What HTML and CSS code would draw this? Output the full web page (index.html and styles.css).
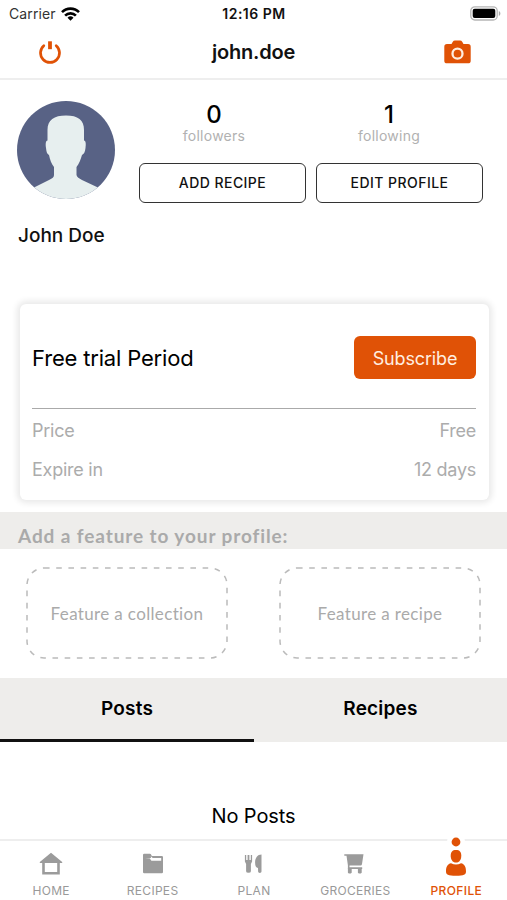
FILE: index.html
```html
<!DOCTYPE html>
<html lang="en">
<head>
<meta charset="utf-8">
<title>john.doe</title>
<link rel="stylesheet" href="styles.css">
</head>
<body>
<div class="app">
  <div class="status">
    <div class="status-left"><span class="carrier">Carrier</span>
      <svg width="19" height="14" viewBox="0 0 19 14" fill="none" stroke="#000" stroke-width="2.6"><path d="M1 5.200a12 12 0 0 1 17 0"/><path d="M4.100 8.600a7.600 7.600 0 0 1 10.800 0"/><path d="M9.500 13.700l-3-3a4.300 4.300 0 0 1 6 0z" fill="#000" stroke="none"/></svg>
    </div>
    <span class="clock">12:16 PM</span>
    <div class="status-right">
      <svg width="31" height="15" viewBox="0 0 31 15"><rect x=".8" y=".8" width="26.400" height="13.200" rx="4" fill="#fff" stroke="#b5b5b5" stroke-width="1.300"/><rect x="2.700" y="2.700" width="22.600" height="9.400" rx="2" fill="#000"/><path d="M28.800 5c2.100 1 2.100 4 0 5z" fill="#aaa"/></svg>
    </div>
  </div>
  <header class="header">
    <svg width="24" height="24" viewBox="0 0 24 24" fill="none" stroke="#e05206" stroke-linecap="round"><path d="M5.800 5.700a9.500 9.500 0 1 0 12.400 0" stroke-width="2.700"/><path d="M12 1.300v7.900" stroke-width="3.800" stroke-linecap="butt"/></svg>
    <h1>john.doe</h1>
    <svg width="27" height="24" viewBox="0 0 27 24"><path d="M3 4h4.500l1.300-2.300Q9.500.500 11 .500h5q1.500 0 2.200 1.200L19.500 4H24q2.700 0 2.700 2.700v14q0 2.600-2.700 2.600H3Q.300 23.300.300 20.700v-14Q.300 4 3 4z" fill="#e05206"/><circle cx="13.500" cy="13.700" r="5" fill="none" stroke="#ffece0" stroke-width="2.300"/></svg>
  </header>
  <section class="profile">
    <svg class="avatar" width="98" height="98" viewBox="0 0 98 98"><defs><clipPath id="round"><circle cx="49" cy="49" r="49"/></clipPath></defs><g clip-path="url(#round)"><path fill="#586285" d="M0 0h98v98H0z"/><path fill="#e7efef" d="M49 14.500C61 14.500 67 19 67 29V39.500C69 40 69 43 68.500 47S67 53 65 54C63.500 59 62 63 59.500 66V74C60 76 62 77.500 65 79L82 87V98H16V87L32 79C35.500 77.500 37 76 37 74V66C34.500 63 33 59 32 54C30 53 29.500 51 29 47S28.500 40 30.500 39.500V29C30.500 19 37 14.500 49 14.500z"/></g></svg>
    <div class="summary">
      <div class="stat"><b>0</b><span>followers</span></div>
      <div class="stat"><b>1</b><span>following</span></div>
      <button class="outline"><span class="add">ADD RECIPE</span></button>
      <button class="outline"><span class="edit">EDIT PROFILE</span></button>
    </div>
    <h2>John Doe</h2>
  </section>
  <section class="card">
    <div class="card-top"><h3>Free trial Period</h3><button class="subscribe">Subscribe</button></div>
    <div class="row"><span class="price">Price</span><span class="free">Free</span></div>
    <div class="row"><span class="expire">Expire in</span><span class="days">12 days</span></div>
  </section>
  <div class="feature-title"><span>Add a feature to your profile:</span></div>
  <div class="features">
    <div class="feature"><svg class="dash" width="202" height="92" viewBox="0 0 202 92"><rect x="1" y="1" width="200" height="90" rx="17"/></svg><span class="collection">Feature a collection</span></div>
    <div class="feature"><svg class="dash" width="202" height="92" viewBox="0 0 202 92"><rect x="1" y="1" width="200" height="90" rx="17"/></svg><span class="recipe">Feature a recipe</span></div>
  </div>
  <div class="tabs"><div class="tab active"><span class="posts">Posts</span></div><div class="tab"><span class="recs">Recipes</span></div></div>
  <main class="empty"><span>No Posts</span></main>
  <nav class="nav">
    <div class="item"><svg width="24" height="24" viewBox="0 0 24 24" fill="#9b9b9b"><path fill-rule="evenodd" d="M12 .800L23.200 10v1H20.800v11.500H3.200V11H.800v-1zM5.800 11v9h12.400v-9z"/></svg><span>HOME</span></div>
    <div class="item"><svg width="24" height="24" viewBox="0 0 24 24"><path fill="#9b9b9b" d="M2 3q0-1.200 1.200-1.200h5.600q1 0 1.400 1l.6 1.200H20.800q1.200 0 1.200 1.200v14.800q0 1.200-1.200 1.200H3.200Q2 21.200 2 20z"/><path fill="#fff" d="M4 6.500h4.800l1.600 2.300H20.200V6.100h-8.600L10.600 4.700H9.500l.8 1.200z"/></svg><span>RECIPES</span></div>
    <div class="item"><svg width="24" height="24" viewBox="0 0 24 24" fill="#9b9b9b"><path d="M2.900 3h1.300v5h1.400V3h1.800v5h1.400V3h1.300v6.500L8.900 12v7.200q0 1.600-2.400 1.600t-2.400-1.600V12L2.900 9.500z"/><path d="M19.500 2.500v17q0 1.400-1.700 1.400t-1.700-1.400l-.1-3.500q-2.900-.5-2.900-5.500c0-4.500 2.500-8 6.400-8z"/></svg><span>PLAN</span></div>
    <div class="item"><svg width="24" height="24" viewBox="0 0 24 24" fill="#9b9b9b"><path d="M1.300 2.300H20.500L19 12q-.2 1.500-1.500 1.500H6.500v1.800h12.700v1.800H4.900V13.200L3.500 3.800H1.300z"/><path d="M4.900 16h3.800v4.700q-1.900 1.800-3.800 0zM14.900 16h3.800v4.700q-1.900 1.800-3.800 0z"/></svg><span>GROCERIES</span></div>
    <div class="item current"><svg class="marker" width="20" height="20" viewBox="0 0 20 20"><circle cx="10" cy="10" r="9" fill="#fff"/><circle cx="10" cy="10" r="4.400" fill="#e05206"/></svg><svg class="person" width="24" height="28" viewBox="0 0 24 28" fill="#e05206"><path d="M12 1c3.600 0 5.300 2 5.300 5.700S15.500 13.600 12 13.600s-5.300-3.200-5.300-6.900S8.400 1 12 1z"/><path d="M7 14.300q5 2.600 10 0C20.500 15 22 18 22 22.500c0 3-2 4.300-10 4.300S2 25.500 2 22.500C2 18 3.500 15 7 14.300z"/></svg><span>PROFILE</span></div>
  </nav>
</div>
</body>
</html>
```
FILE: styles.css
```css
* { box-sizing: border-box; }
body { margin: 0; background: #fff; color: #111; font-family: Inter, sans-serif; }
h1, h2, h3 { margin: 0; }
span, h1, h2, h3 { white-space: nowrap; }
svg { display: block; flex: none; }
button { font: inherit; padding: 0; }
.app { width: 507px; height: 900px; display: flex; flex-direction: column; overflow: hidden; }
.status { height: 28px; display: grid; grid-template-columns: 1fr auto 1fr; align-items: center; padding: 0 8px 1px 9px; font-size: 14px; }
.status-left { display: flex; gap: 5px; align-items: center; color: #333; }
.carrier { letter-spacing: .1px; }
.clock { font-weight: 600; letter-spacing: .5px; }
.status-right { display: flex; justify-content: flex-end; margin-right: -2px; }
.header { height: 52px; border-bottom: 2px solid #eee; display: flex; justify-content: space-between; align-items: center; padding: 0 36px 2px 38px; }
h1 { font-size: 20px; font-weight: 600; letter-spacing: -.2px; padding-left: 1px; }
.profile { height: 224px; padding: 21px 24px 0 17px; display: grid; grid-template-columns: 122px 1fr; grid-template-rows: 102px auto; align-content: start; }
.summary { display: grid; grid-template-columns: 167px 167px; column-gap: 10px; grid-template-rows: 62px 40px; }
.stat { display: flex; flex-direction: column; align-items: center; padding: 1px 17px 0 0; }
.stat:nth-child(2) { padding-right: 21px; }
.stat b { font-size: 24px; line-height: 26px; font-weight: 500; color: #000; }
.stat span { font-size: 14px; line-height: 16px; color: #b1b1b1; letter-spacing: .25px; }
.outline { border: 1.5px solid #333; border-radius: 6px; background: #fff; font-size: 14px; font-weight: 500; color: #111; letter-spacing: .45px; padding-bottom: 1px; }
h2 { font-size: 19px; line-height: 24px; font-weight: 500; padding: 21px 0 0 1px; }
.card { margin: 0 18px 0 20px; height: 196px; border-radius: 6px; padding: 0 13px 0 12px; box-shadow: 0 0 6px 3px #e9e9e9; background: #fff; }
.card-top { height: 105px; padding-top: 3px; border-bottom: 1px solid #aaa; display: flex; align-items: center; justify-content: space-between; }
h3 { font-size: 22px; font-weight: 400; color: #000; letter-spacing: -.18px; }
.subscribe { width: 122px; height: 43px; border: 0; border-radius: 6px; background: #e05206; color: #ffeee0; font-size: 18px; letter-spacing: -.15px; padding-top: 2px; }
.row { height: 39px; padding-top: 4px; display: flex; align-items: center; justify-content: space-between; font-size: 18px; letter-spacing: -.25px; color: #acacac; }
.feature-title { margin-top: 12px; height: 37px; background: #eeedeb; padding: 10px 18px 0; font: 700 19px/28px Lato, sans-serif; letter-spacing: .9px; color: #aaa; }
.features { height: 129px; display: flex; gap: 51px; padding: 18px 26px; }
.feature { position: relative; width: 202px; height: 92px; display: flex; align-items: center; justify-content: center; padding-top: 1px; color: #aaa; font: 400 17px/20px Lato, sans-serif; letter-spacing: .35px; }
.dash { position: absolute; inset: 0; fill: none; stroke: #bbb; stroke-width: 1.5; stroke-dasharray: 5.6 6.6; }
.tabs { height: 64px; display: grid; grid-template-columns: 254px 253px; background: #eeedeb; font-weight: 600; font-size: 19px; letter-spacing: .2px; color: #000; }
.tab { display: flex; align-items: center; justify-content: center; padding-bottom: 3px; }
.active { border-bottom: 3px solid #111; padding-bottom: 0; }
.empty { height: 97px; display: flex; justify-content: center; align-items: flex-start; padding-top: 61px; font-size: 20px; line-height: 26px; letter-spacing: -.1px; color: #000; }
.nav { height: 61px; border-top: 2px solid #eee; display: grid; grid-template-columns: repeat(5, 1fr); }
.item { position: relative; display: flex; flex-direction: column; align-items: center; padding: 11px 0 0 1px; color: #999; font-size: 12px; letter-spacing: .3px; line-height: 16px; }
.item > span { margin-top: 7px; }
.current { color: #e05206; font-weight: 500; padding: 8px 0 0; letter-spacing: .4px; }
.current > span { margin-top: 6px; }
.marker { position: absolute; top: -9px; left: 40px; }
.person { position: relative; }
```
